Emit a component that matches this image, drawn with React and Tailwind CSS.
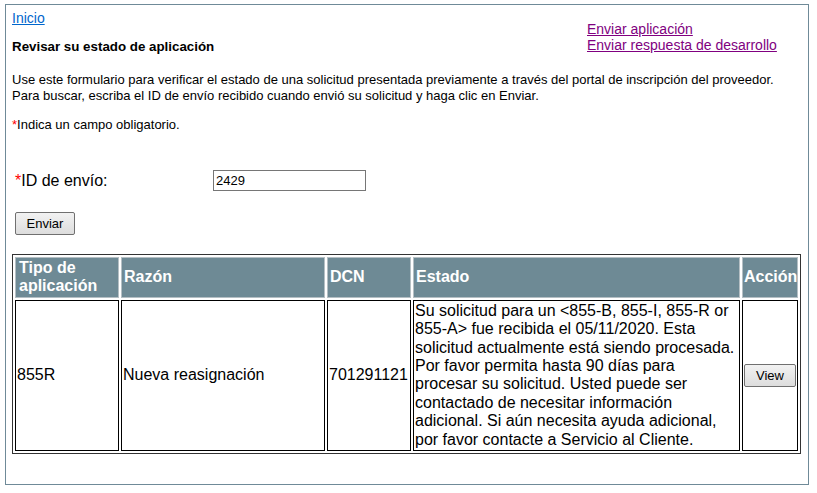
import React from "react";

const font = { fontFamily: '"Liberation Sans", Arial, sans-serif' };

export default function App() {
  return (
    <div style={font} className="bg-white text-black w-[817px] h-[493px] pt-[4px] pl-[5px]">
      <div className="w-[804px] h-[481px] border border-[#6f8a98] px-[6px] pt-[5px]">
        <div className="flex">
          <div className="w-[575px]">
            <a href="#" className="block w-fit text-[14px] leading-[16px] text-[#0066cc] underline">Inicio</a>
            <h1 className="mt-[13px] text-[13.33px] leading-[16px] font-bold">Revisar su estado de aplicación</h1>
          </div>
          <div className="mt-[11px] flex flex-col text-[14px] leading-[16px] text-[#800080]">
            <a href="#" className="underline w-fit">Enviar aplicación</a>
            <a href="#" className="underline w-fit">Enviar respuesta de desarrollo</a>
          </div>
        </div>

        <p className="mt-[17px] text-[13px] leading-[16px]">
          Use este formulario para verificar el estado de una solicitud presentada previamente a través del portal de inscripción del proveedor.
          <br />
          Para buscar, escriba el ID de envío recibido cuando envió su solicitud y haga clic en Enviar.
        </p>

        <p className="mt-[13px] text-[13px] leading-[16px]">
          <span className="text-[#ff0000]">*</span>Indica un campo obligatorio.
        </p>

        <div className="mt-[37px] flex items-center pl-[3px]">
          <label className="w-[198px] text-[16px] leading-[18px]">
            <span className="text-[#ff0000]">*</span>ID de envío:
          </label>
          <input
            defaultValue="2429"
            className="w-[153px] h-[21px] border border-[#767676] px-[2px] text-[13px] outline-none"
            style={font}
          />
        </div>

        <button
          className="mt-[21px] ml-[3px] w-[60px] h-[23px] border border-[#707070] rounded-[2px] bg-gradient-to-b from-[#f2f2f2] to-[#dddddd] text-[13px] leading-[21px] text-black"
          style={font}
        >
          Enviar
        </button>

        <table className="mt-[19px] w-[789px] table-fixed border-separate border-spacing-[2px] border border-[#333333] text-[16px] leading-[18.4px]">
          <thead>
            <tr>
              <Th className="w-[104px] px-[3px]">Tipo de<br />aplicación</Th>
              <Th className="w-[204px] px-[2px]">Razón</Th>
              <Th className="w-[84px] px-[2px]">DCN</Th>
              <Th className="w-[327px] px-[2px]">Estado</Th>
              <Th className="w-[56px] px-[1px] whitespace-nowrap">Acción</Th>
            </tr>
          </thead>
          <tbody>
            <tr>
              <Td>855R</Td>
              <Td>Nueva reasignación</Td>
              <Td>701291121</Td>
              <Td>
                Su solicitud para un &lt;855-B, 855-I, 855-R or 855-A&gt; fue recibida el 05/11/2020. Esta solicitud actualmente está siendo procesada. Por favor permita hasta 90 días para procesar su solicitud. Usted puede ser contactado de necesitar información adicional. Si aún necesita ayuda adicional, por favor contacte a Servicio al Cliente.
              </Td>
              <Td className="text-center">
                <button
                  className="w-[52px] h-[23px] border border-[#707070] rounded-[2px] bg-gradient-to-b from-[#f2f2f2] to-[#dddddd] text-[13px] leading-[21px]"
                  style={font}
                >
                  View
                </button>
              </Td>
            </tr>
          </tbody>
        </table>
      </div>
    </div>
  );
}

function Th({ className = "", children }) {
  return (
    <th className={`border border-[#b5bfc4] bg-[#6e8a95] text-white font-bold text-left align-middle py-[1px] overflow-hidden ${className}`}>
      {children}
    </th>
  );
}

function Td({ className = "", children }) {
  return <td className={`border border-black px-[1px] py-[1px] align-middle ${className}`}>{children}</td>;
}
